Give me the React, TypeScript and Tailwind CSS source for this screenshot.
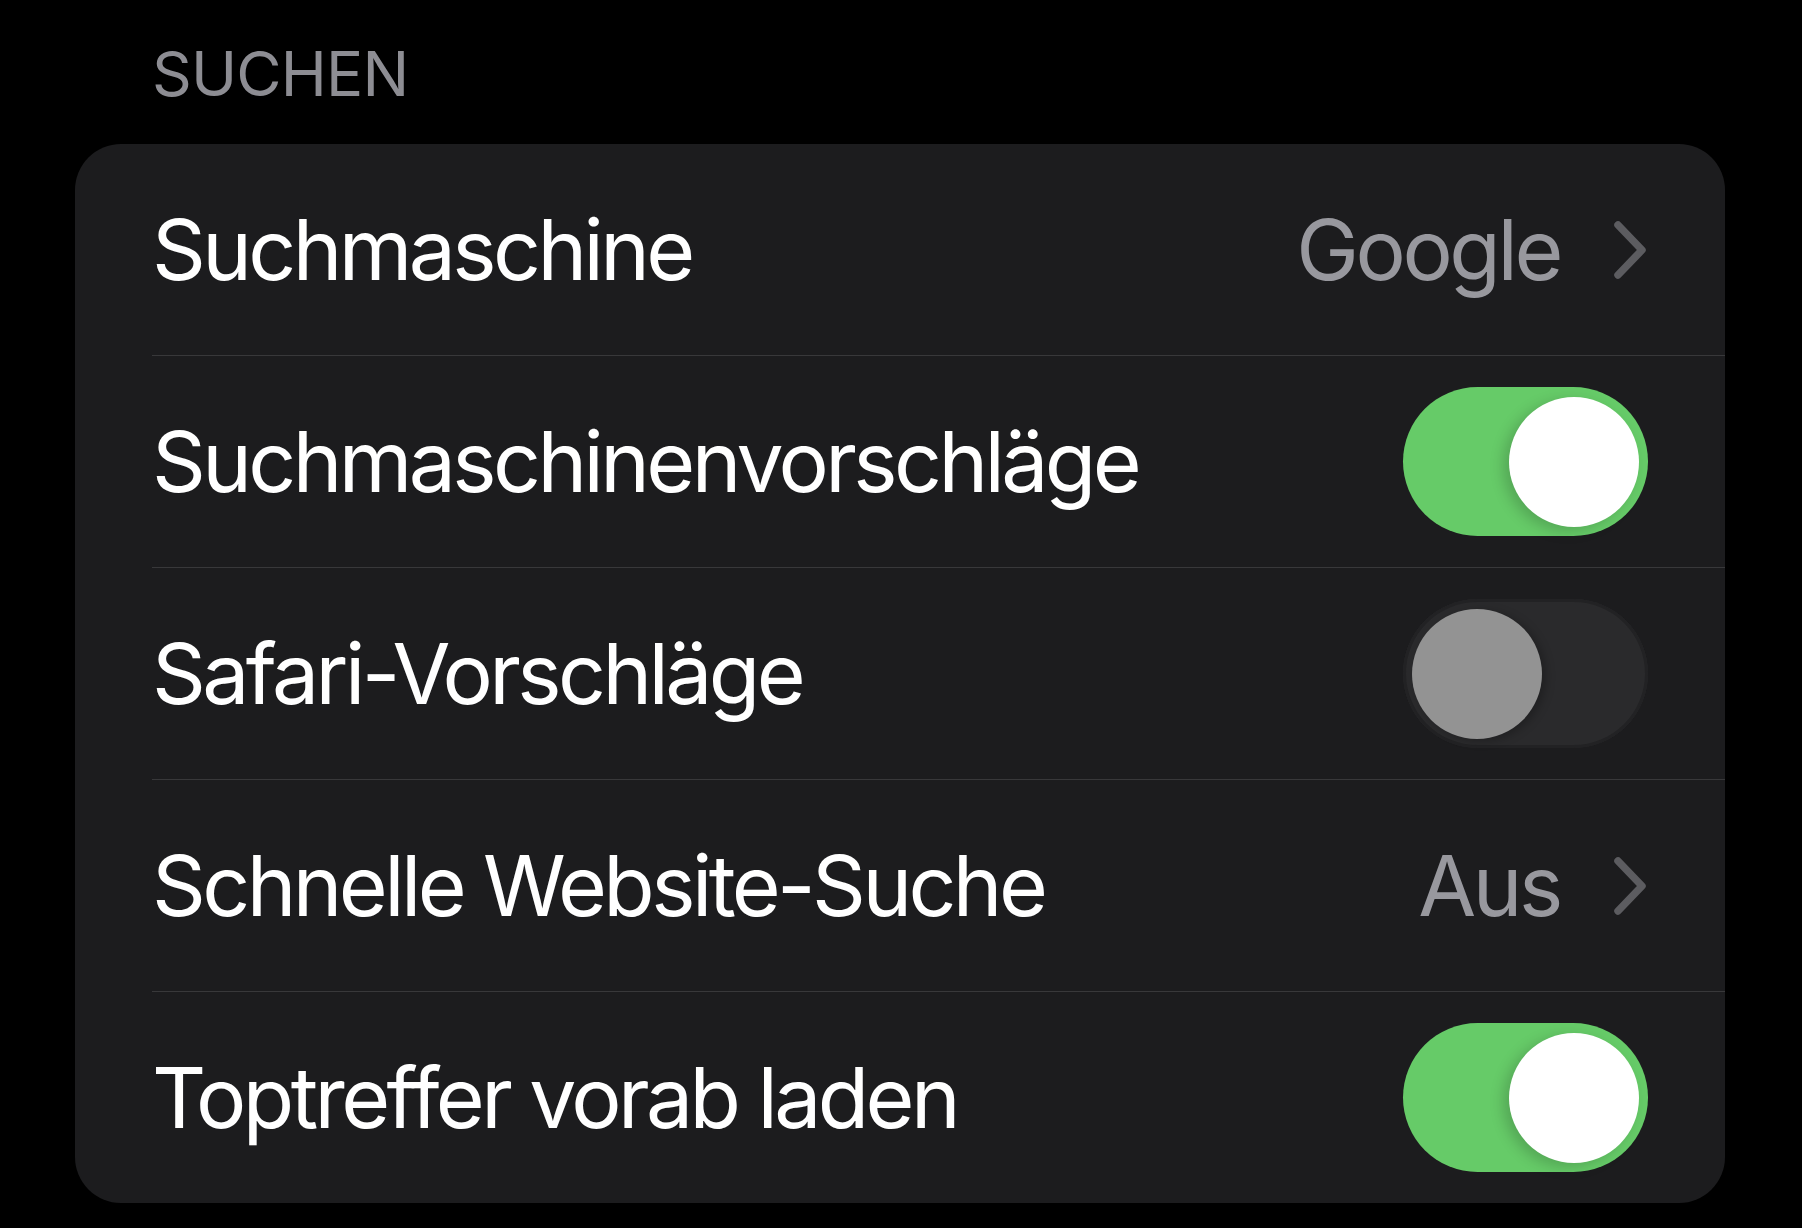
import React from 'react';

type Row =
  | { label: string; kind: 'link'; value: string }
  | { label: string; kind: 'toggle'; on: boolean };

const rows: Row[] = [
  { label: 'Suchmaschine', kind: 'link', value: 'Google' },
  { label: 'Suchmaschinenvorschläge', kind: 'toggle', on: true },
  { label: 'Safari-Vorschläge', kind: 'toggle', on: false },
  { label: 'Schnelle Website-Suche', kind: 'link', value: 'Aus' },
  { label: 'Toptreffer vorab laden', kind: 'toggle', on: true },
];

function Chevron() {
  return (
    <svg width="36" height="60" viewBox="0 0 36 60" className="shrink-0">
      <polyline
        points="6,5 30,30 6,55"
        fill="none"
        stroke="#5c5c60"
        strokeWidth="7.5"
        strokeLinecap="round"
        strokeLinejoin="round"
      />
    </svg>
  );
}

function Toggle({ on }: { on: boolean }) {
  if (on) {
    return (
      <div className="flex h-[149px] w-[245px] shrink-0 items-center justify-end rounded-full bg-[#66cb68] pr-[9px]">
        <div className="h-[130px] w-[130px] rounded-full bg-white shadow-[-6px_4px_14px_rgba(0,0,0,0.18)]" />
      </div>
    );
  }
  return (
    <div className="flex h-[149px] w-[245px] shrink-0 items-center justify-start rounded-full bg-[#2a2a2c] pl-[9px] ring-[3px] ring-inset ring-[#222224]">
      <div className="h-[130px] w-[130px] rounded-full bg-[#939393] shadow-[4px_2px_10px_rgba(0,0,0,0.25)]" />
    </div>
  );
}

export default function App() {
  return (
    <div
      className="min-h-screen bg-black pb-[25px]"
      style={{ fontFamily: 'Inter, "Noto Sans", sans-serif' }}
    >
      <div className="pl-[152px] pt-[43px] text-[62px] leading-[62px] tracking-[-0.8px] text-[#8d8d93]">
        SUCHEN
      </div>

      <div className="ml-[75px] mt-[39px] w-[1650px] overflow-hidden rounded-[46px] bg-[#1c1c1e]">
        {rows.map((row, i) => (
          <div key={row.label}>
            {i > 0 && <div className="ml-[77px] h-px bg-[#38383a]" />}
            <div className="flex h-[211px] items-center justify-between pl-[77px] pr-[77px]">
              <span className="text-[84px] leading-none tracking-[-3.6px] text-white">{row.label}</span>
              {row.kind === 'link' ? (
                <div className="flex items-center gap-[52px]">
                  <span className="text-[84px] leading-none tracking-[-3.4px] text-[#98989e]">
                    {row.value}
                  </span>
                  <Chevron />
                </div>
              ) : (
                <Toggle on={row.on} />
              )}
            </div>
          </div>
        ))}
      </div>
    </div>
  );
}
